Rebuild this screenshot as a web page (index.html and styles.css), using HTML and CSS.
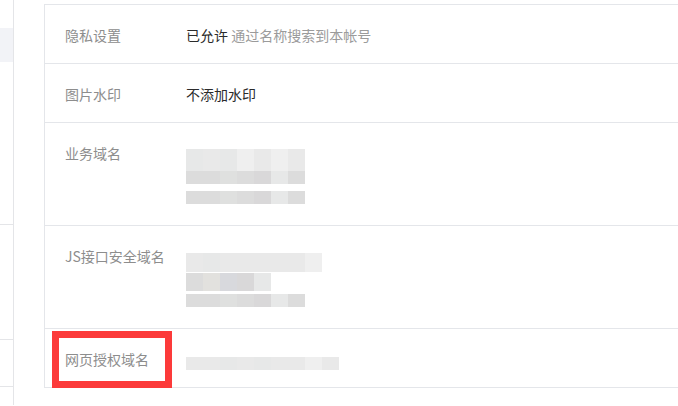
FILE: index.html
```html
<!DOCTYPE html>
<html lang="zh-CN">
<head>
<meta charset="utf-8">
<title>设置</title>
<link rel="stylesheet" href="styles.css">
</head>
<body>
<div class="page">
  <aside class="side">
    <div class="side-active"></div>
    <div class="side-line l1"></div>
    <div class="side-line l2"></div>
    <div class="side-line l3"></div>
  </aside>
  <main class="panel">
    <div class="row">
      <div class="label">隐私设置</div>
      <div class="value"><span class="strong">已允许</span> <span class="hint">通过名称搜索到本帐号</span></div>
    </div>
    <div class="row">
      <div class="label">图片水印</div>
      <div class="value"><span class="strong">不添加水印</span></div>
    </div>
    <div class="row tall">
      <div class="label">业务域名</div>
      <div class="value mosaic m-biz">
        <div class="mline h22"><i class="a"></i><i class="b"></i><i class="a"></i><i class="c"></i><i class="b"></i><i class="c"></i><i class="b"></i></div>
        <div class="mline h13"><i class="d"></i><i class="d"></i><i class="e"></i><i class="d"></i><i class="f"></i><i class="a"></i><i class="d"></i></div>
        <div class="mline h13 gap7"><i class="d"></i><i class="d"></i><i class="e"></i><i class="d"></i><i class="f"></i><i class="a"></i><i class="d"></i></div>
      </div>
    </div>
    <div class="row tall">
      <div class="label">JS接口安全域名</div>
      <div class="value mosaic m-js">
        <div class="mline h19"><i class="b"></i><i class="a"></i><i class="b"></i><i class="b"></i><i class="b"></i><i class="b"></i><i class="b"></i><i class="c"></i></div>
        <div class="mline h18 gap1"><i class="d"></i><i class="g"></i><i class="h"></i><i class="f"></i><i class="a"></i></div>
        <div class="mline h13 gap3"><i class="d"></i><i class="d"></i><i class="e"></i><i class="d"></i><i class="f"></i><i class="a"></i><i class="d"></i></div>
      </div>
    </div>
    <div class="row">
      <div class="label">网页授权域名</div>
      <div class="value mosaic m-web">
        <div class="mline h13"><i class="b"></i><i class="b"></i><i class="a"></i><i class="b"></i><i class="a"></i><i class="b"></i><i class="b"></i><i class="c"></i><i class="b"></i></div>
      </div>
      <div class="highlight"></div>
    </div>
  </main>
</div>
</body>
</html>
```
FILE: styles.css
```css
html, body {
  margin: 0;
  padding: 0;
  background: #ffffff;
  overflow: hidden;
}
body {
  width: 678px;
  height: 406px;
  font-family: "Noto Sans CJK SC", "Noto Sans", sans-serif;
  font-size: 14px;
}
.page {
  display: flex;
  align-items: flex-start;
  height: 406px;
}
.side {
  position: relative;
  width: 13px;
  height: 405px;
  border-right: 1px solid #e4e5e8;
  flex: none;
}
.side-active {
  margin-top: 28px;
  height: 34px;
  background: #f2f3f7;
}
.side-line {
  position: absolute;
  left: 0;
  width: 13px;
  height: 1px;
  background: #e4e5e8;
}
.l1 { top: 224px; }
.l2 { top: 339px; }
.l3 { top: 386px; }
.panel {
  margin-left: 30px;
  margin-top: 4px;
  flex: 1;
  min-width: 0;
  border-top: 1px solid #e4e6ea;
  border-left: 1px solid #e4e6ea;
}
.row {
  position: relative;
  display: grid;
  grid-template-columns: 121px 1fr;
  padding: 19px 0 17px 20px;
  line-height: 22px;
  height: 22px;
  border-bottom: 1px solid #e4e6ea;
}
.row.tall {
  height: 66px;
}
.label {
  color: #8d8d8d;
}
.strong {
  color: #2b2b2b;
}
.hint {
  color: #9b9b9b;
}
.mosaic {
  position: relative;
}
.mline {
  display: flex;
}
.mline i {
  display: block;
  width: 17px;
  height: 100%;
}
.h22 { height: 22px; }
.h19 { height: 19px; }
.h18 { height: 18px; }
.h13 { height: 13px; }
.gap7 { margin-top: 7px; }
.gap3 { margin-top: 3px; }
.gap1 { margin-top: 1px; }
.m-biz { margin-top: 7px; }
.m-js { margin-top: 8px; }
.m-web { margin-top: 9px; }
.mline i.a { background: #e7e8e8; }
.mline i.b { background: #e9e9e9; }
.mline i.c { background: #efefef; }
.mline i.d { background: #dcdcdc; }
.mline i.e { background: #dfe0df; }
.mline i.f { background: #d9d8d9; }
.mline i.g { background: #e2e1de; }
.mline i.h { background: #d8d9dd; }
.highlight {
  position: absolute;
  left: 7px;
  top: 2px;
  width: 106px;
  height: 43px;
  border: 7px solid #fc3a3a;
}
```
